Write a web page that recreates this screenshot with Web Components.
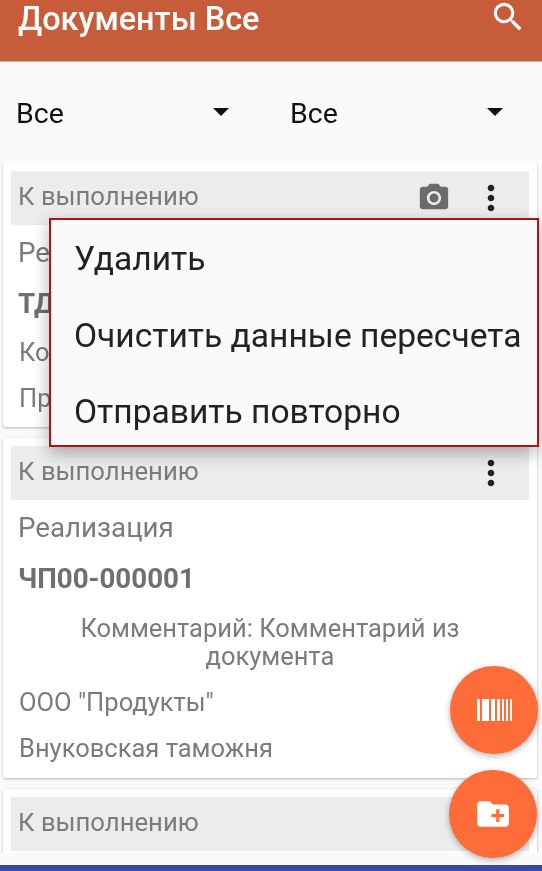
<!DOCTYPE html>
<html lang="ru">
<head>
<meta charset="utf-8">
<title>Документы</title>
<style>
    html, body { margin: 0; padding: 0; }
    body { font-family: Roboto, "Liberation Sans", sans-serif; background: #fafafa; }
</style>
</head>
<body>
<doc-screen>
    <doc-appbar slot="top">Документы Все</doc-appbar>
    <doc-filters slot="top">
        <doc-select>Все</doc-select>
        <doc-select>Все</doc-select>
    </doc-filters>

    <doc-card status="К выполнению" camera>
        <doc-field kind="type">Ре</doc-field>
        <doc-field kind="number">ТД</doc-field>
        <doc-field kind="short">Ко</doc-field>
        <doc-field kind="short">Пр</doc-field>
    </doc-card>
    <doc-card status="К выполнению" style="padding-bottom:7px">
        <doc-field kind="type">Реализация</doc-field>
        <doc-field kind="number">ЧП00-000001</doc-field>
        <doc-field kind="comment">Комментарий: Комментарий из документа</doc-field>
        <doc-field kind="short">ООО "Продукты"</doc-field>
        <doc-field kind="short">Внуковская таможня</doc-field>
    </doc-card>
    <doc-card status="К выполнению"></doc-card>

    <doc-menu slot="over">
        <span>Удалить</span>
        <span>Очистить данные пересчета</span>
        <span>Отправить повторно</span>
    </doc-menu>
    <doc-fab slot="over" icon="barcode" style="left:450px;top:666px"></doc-fab>
    <doc-fab slot="over" icon="folder" style="left:449px;top:770px"></doc-fab>
</doc-screen>

<script>
// Page frame: top part, scrolling list clipped at the nav bar, overlays on top
class DocScreen extends HTMLElement {
    constructor() {
        super();
        this.attachShadow({mode: 'open'});
        this.shadowRoot.innerHTML = `
            <style>
                :host {
                    display: flex;
                    flex-direction: column;
                    position: relative;
                    width: 542px;
                    height: 871px;
                    overflow: hidden;
                    background: #fafafa;
                    filter: blur(0.4px);
                }
                .list {
                    height: 690px;
                    overflow: hidden;
                    display: flex;
                    flex-direction: column;
                    gap: 11px;
                    padding: 0 5px 0 3px;
                    flex: none;
                }
                .gap { flex: 1; }
                .nav { height: 6px; background: #3949ab; flex: none; }
            </style>
            <slot name="top"></slot>
            <div class="list"><slot></slot></div>
            <div class="gap"></div>
            <div class="nav"></div>
            <slot name="over"></slot>
        `;
    }
}

class DocAppbar extends HTMLElement {
    constructor() {
        super();
        this.attachShadow({mode: 'open'});
        this.shadowRoot.innerHTML = `
            <style>
                :host {
                    display: flex;
                    justify-content: space-between;
                    align-items: flex-start;
                    height: 62px;
                    box-sizing: border-box;
                    padding-left: 18px;
                    padding-right: 15px;
                    background: #c65c3a;
                    border-bottom: 1px solid #e9a98f;
                    color: #fff;
                    font-size: 32.4px;
                    font-weight: 500;
                    line-height: 38px;
                    flex: none;
                }
                svg { width: 38px; height: 38px; margin-top: -2px; fill: #fff; }
            </style>
            <span><slot></slot></span>
            <svg viewBox="0 0 24 24"><path d="M15.5 14h-.79l-.28-.27A6.47 6.47 0 0 0 16 9.5 6.5 6.5 0 1 0 9.5 16c1.61 0 3.09-.59 4.23-1.57l.27.28v.79l5 4.99L20.49 19l-4.99-5zm-6 0C7.01 14 5 11.99 5 9.5S7.01 5 9.5 5 14 7.01 14 9.5 11.99 14 9.5 14z"/></svg>
        `;
    }
}

class DocFilters extends HTMLElement {
    constructor() {
        super();
        this.attachShadow({mode: 'open'});
        this.shadowRoot.innerHTML = `
            <style>
                :host {
                    display: flex;
                    align-items: center;
                    gap: 61px;
                    height: 101px;
                    box-sizing: border-box;
                    padding: 2px 0 0 16px;
                    flex: none;
                }
            </style>
            <slot></slot>
        `;
    }
}

class DocSelect extends HTMLElement {
    constructor() {
        super();
        this.attachShadow({mode: 'open'});
        this.shadowRoot.innerHTML = `
            <style>
                :host {
                    display: flex;
                    justify-content: space-between;
                    align-items: center;
                    width: 213px;
                    color: #111;
                    font-size: 28.5px;
                    line-height: 34px;
                }
                .arrow {
                    width: 0;
                    height: 0;
                    margin-bottom: 4px;
                    border-left: 8px solid transparent;
                    border-right: 8px solid transparent;
                    border-top: 8px solid #111;
                }
            </style>
            <span><slot></slot></span>
            <span class="arrow"></span>
        `;
    }
}

class DocCard extends HTMLElement {
    constructor() {
        super();
        this.attachShadow({mode: 'open'});
        const camera = this.hasAttribute('camera') ? `
            <svg class="camera" viewBox="0 0 24 24"><path d="M12 12m-3.2 0a3.2 3.2 0 1 0 6.4 0a3.2 3.2 0 1 0-6.4 0M9 2L7.17 4H4c-1.1 0-2 .9-2 2v12c0 1.1.9 2 2 2h16c1.1 0 2-.9 2-2V6c0-1.1-.9-2-2-2h-3.17L15 2H9zm3 15c-2.76 0-5-2.24-5-5s2.24-5 5-5 5 2.24 5 5-2.24 5-5 5z"/></svg>` : '';
        this.shadowRoot.innerHTML = `
            <style>
                :host {
                    display: block;
                    flex: none;
                    background: #fff;
                    border-radius: 3px;
                    box-shadow: 0 1px 3px rgba(0, 0, 0, .28);
                    padding: 8px 8px 6px;
                }
                .head {
                    display: flex;
                    align-items: center;
                    height: 54px;
                    padding-left: 7px;
                    background: #ececec;
                    color: #7b7b7b;
                    font-size: 25.7px;
                }
                .status { flex: 1; padding-bottom: 4px; }
                svg { flex: none; }
                .camera { width: 34px; height: 34px; fill: #6b6b6b; margin-right: 20px; }
                .more { width: 40px; height: 40px; fill: #222; margin-right: 18px; }
                .body { padding-top: 2px; }
            </style>
            <div class="head">
                <span class="status">${this.getAttribute('status')}</span>
                ${camera}
                <svg class="more" viewBox="0 0 24 24"><path d="M12 8c1.1 0 2-.9 2-2s-.9-2-2-2-2 .9-2 2 .9 2 2 2zm0 2c-1.1 0-2 .9-2 2s.9 2 2 2 2-.9 2-2-.9-2-2-2zm0 6c-1.1 0-2 .9-2 2s.9 2 2 2 2-.9 2-2-.9-2-2-2z"/></svg>
            </div>
            <div class="body"><slot></slot></div>
        `;
    }
}

class DocField extends HTMLElement {
    constructor() {
        super();
        this.attachShadow({mode: 'open'});
        this.shadowRoot.innerHTML = `
            <style>
                :host {
                    display: flex;
                    align-items: center;
                    height: 46px;
                    padding-left: 8px;
                    color: #7b7b7b;
                    font-size: 25.5px;
                }
                :host([kind="type"]) { height: 51px; font-size: 27.7px; padding-left: 7px; }
                :host([kind="number"]) { height: 51px; font-weight: 700; font-size: 27.7px; color: #6f6f6f; padding-left: 7px; }
                :host([kind="comment"]) {
                    display: block;
                    height: auto;
                    margin: 10px 0 9px;
                    padding: 0 8px;
                    line-height: 28px;
                    text-align: center;
                }
            </style>
            <slot></slot>
        `;
    }
}

class DocMenu extends HTMLElement {
    constructor() {
        super();
        this.attachShadow({mode: 'open'});
        this.shadowRoot.innerHTML = `
            <style>
                :host {
                    position: absolute;
                    left: 49px;
                    top: 218px;
                    width: 490px;
                    height: 229px;
                    box-sizing: border-box;
                    padding: 1px 0 0 23px;
                    background: #fafafa;
                    border: 2px solid #b71010;
                    box-shadow: 0 6px 16px rgba(0, 0, 0, .3);
                    color: #222;
                    font-size: 33.6px;
                }
                ::slotted(span) { display: block; line-height: 76.5px; white-space: nowrap; }
            </style>
            <slot></slot>
        `;
    }
}

class DocFab extends HTMLElement {
    constructor() {
        super();
        this.attachShadow({mode: 'open'});
        const icons = {
            barcode: `<svg width="35" height="22" viewBox="0 0 35 22" fill="#fff">
                <rect x="0" width="3" height="22"/><rect x="5" width="7" height="22"/>
                <rect x="14" width="4" height="22"/><rect x="20" width="3" height="22"/>
                <rect x="25" width="2" height="22"/><rect x="29" width="2" height="22"/>
                <rect x="33" width="2" height="22"/></svg>`,
            folder: `<svg width="38" height="38" viewBox="0 0 24 24" fill="#fff"><path d="M20 6h-8l-2-2H4c-1.11 0-1.99.89-1.99 2L2 18c0 1.11.89 2 2 2h16c1.11 0 2-.89 2-2V8c0-1.11-.89-2-2-2zm-1 8h-3v3h-2v-3h-3v-2h3V9h2v3h3v2z"/></svg>`
        };
        this.shadowRoot.innerHTML = `
            <style>
                :host {
                    position: absolute;
                    display: flex;
                    align-items: center;
                    justify-content: center;
                    width: 88px;
                    height: 88px;
                    border-radius: 50%;
                    background: #fe6c3a;
                    box-shadow: 0 2px 6px rgba(0, 0, 0, .3);
                }
            </style>
            ${icons[this.getAttribute('icon')]}
        `;
    }
}

customElements.define('doc-screen', DocScreen);
customElements.define('doc-appbar', DocAppbar);
customElements.define('doc-filters', DocFilters);
customElements.define('doc-select', DocSelect);
customElements.define('doc-card', DocCard);
customElements.define('doc-field', DocField);
customElements.define('doc-menu', DocMenu);
customElements.define('doc-fab', DocFab);
</script>
</body>
</html>
